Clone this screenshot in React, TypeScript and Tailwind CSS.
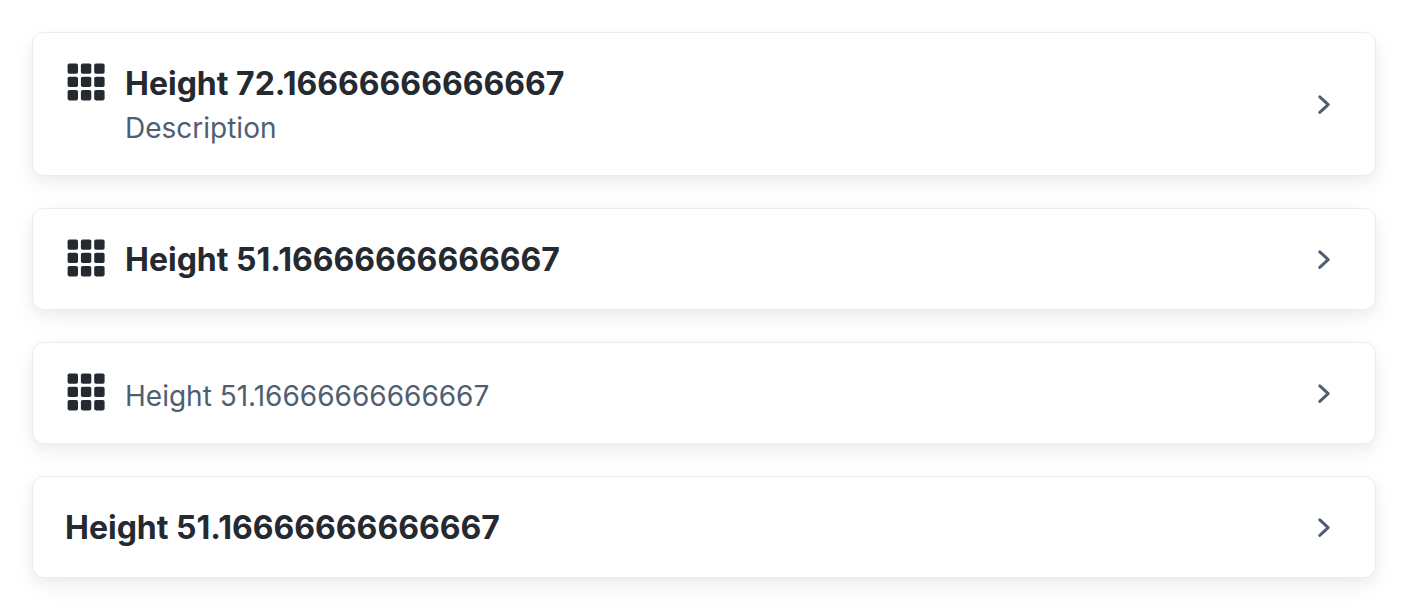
type CardProps = { icon?: boolean; title?: string; description?: string };

function GridIcon() {
  return (
    <svg viewBox="0 0 38 38" className="size-[38px] shrink-0 fill-[#252a31]" aria-hidden="true">
      {[0.4, 13.7, 27].map((y) =>
        [0.6, 13.9, 27.2].map((x) => <rect key={`${x}-${y}`} x={x} y={y} width="10.4" height="10.4" rx="1.8" />),
      )}
    </svg>
  );
}

function Card({ icon, title, description }: CardProps) {
  return (
    <button
      type="button"
      className="flex w-full items-center justify-between rounded-xl border border-[#e8edf1] bg-white pt-[30px] pr-10 pb-7 pl-8 text-left shadow-[0_8px_24px_rgba(37,42,49,0.06),0_4px_8px_rgba(37,42,49,0.04)]"
    >
      <span className="flex items-start gap-5">
        {icon && (
          <span className="pl-0.5">
            <GridIcon />
          </span>
        )}
        <span className="flex flex-col">
          {title && <span className="text-[32px] leading-[42px] font-bold text-[#252a31]">{title}</span>}
          {description && (
            <span className="pt-1 text-[28px] leading-[38px] text-[#4f5e71]">{description}</span>
          )}
        </span>
      </span>
      <svg viewBox="0 0 20 24" className="h-6 w-5 shrink-0 fill-none stroke-[#4f5e71] stroke-3" aria-hidden="true">
        <path d="M4.8 3.8l8.4 7.8-8.4 7.8" strokeLinecap="round" strokeLinejoin="round" />
      </svg>
    </button>
  );
}

export default function App() {
  return (
    <main className="flex flex-col gap-8 bg-white p-8 font-['Inter',sans-serif]">
      <Card icon title="Height 72.16666666666667" description="Description" />
      <Card icon title="Height 51.16666666666667" />
      <Card icon description="Height 51.16666666666667" />
      <Card title="Height 51.16666666666667" />
    </main>
  );
}
